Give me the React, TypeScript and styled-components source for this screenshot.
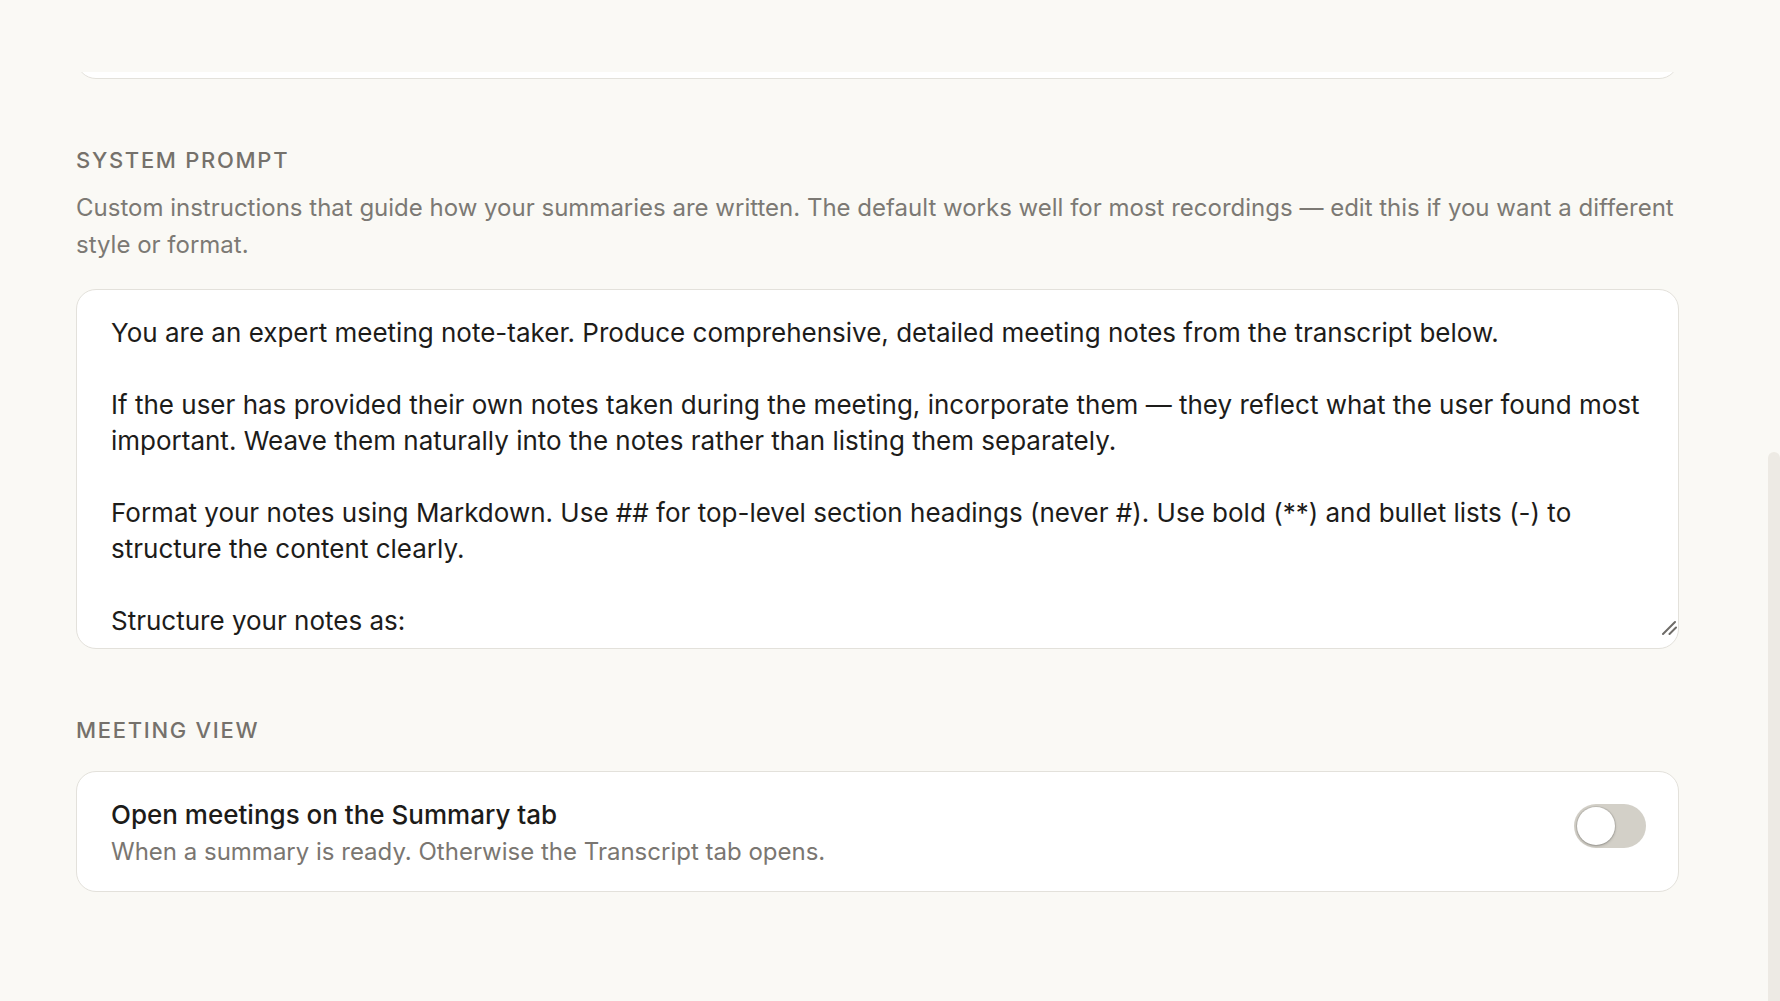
import { useState } from "react";
import styled, { createGlobalStyle } from "styled-components";

const GlobalStyle = createGlobalStyle`
    html, body {
        margin: 0;
        padding: 0;
        background-color: #faf9f5;
        font-family: Inter, "Noto Sans", "Liberation Sans", sans-serif;
        -webkit-font-smoothing: antialiased;
    }
`;

const Page = styled.div`
    display: flex;
    width: 100%;
    height: 100vh;
    overflow: hidden;
    background-color: #faf9f5;
`;

const Main = styled.main`
    flex: 1;
    min-width: 0;
    padding: 72px 89px 0 76px;
    box-sizing: border-box;
`;

const ScrollRail = styled.div`
    width: 12px;
    display: flex;
    flex-direction: column;
`;

const ScrollThumb = styled.div`
    flex: 1;
    margin-top: 452px;
    background-color: #edeae4;
    border-radius: 6px 6px 0 0;
`;

// bottom of the card that is scrolled up under the header
const CardTail = styled.div`
    height: 7px;
    overflow: hidden;
    display: flex;
    flex-direction: column;
    justify-content: flex-end;
`;

const Card = styled.div<{ $tall?: boolean }>`
    flex-shrink: 0;
    box-sizing: border-box;
    height: ${({ $tall }) => ($tall ? "48px" : "auto")};
    background-color: #ffffff;
    border: 1px solid #e3e1db;
    border-radius: 20px;
`;

const Section = styled.section`
    margin-top: 66px;
`;

const Label = styled.h3`
    margin: 0;
    font-size: 22px;
    line-height: 30px;
    font-weight: 500;
    letter-spacing: 1.7px;
    text-transform: uppercase;
    color: #75716b;
`;

const Description = styled.p`
    margin: 14px 0 0;
    font-size: 24px;
    line-height: 37.4px;
    color: #7c7974;
`;

const PromptBox = styled.div`
    position: relative;
    margin-top: 25px;
`;

const PromptInput = styled.textarea`
    display: block;
    width: 100%;
    height: 360px;
    box-sizing: border-box;
    padding: 25px 34px;
    font-family: inherit;
    font-size: 26px;
    line-height: 36px;
    color: #1d1c1a;
    background-color: #ffffff;
    border: 1px solid #e3e1db;
    border-radius: 20px;
    resize: none;
    overflow: hidden;
    outline: none;
`;

const Grip = styled.svg`
    position: absolute;
    right: 2px;
    bottom: 13px;
    width: 16px;
    height: 16px;
    pointer-events: none;
`;

const SettingRow = styled(Card)`
    margin-top: 26px;
    display: flex;
    align-items: flex-start;
    justify-content: space-between;
    padding: 26px 32px 23px 34px;
`;

const SettingText = styled.div`
    display: flex;
    flex-direction: column;
`;

const SettingTitle = styled.div`
    font-size: 26px;
    line-height: 33.6px;
    font-weight: 500;
    color: #1c1b19;
`;

const SettingHint = styled.div`
    margin-top: 4px;
    font-size: 24px;
    line-height: 33px;
    color: #7a7671;
`;

const Toggle = styled.button<{ $on: boolean }>`
    margin-top: 6px;
    width: 72px;
    height: 44px;
    padding: 3px;
    border: none;
    border-radius: 22px;
    background-color: ${({ $on }) => ($on ? "#2d2b28" : "#d3d0c8")};
    display: flex;
    justify-content: ${({ $on }) => ($on ? "flex-end" : "flex-start")};
    cursor: pointer;
    flex-shrink: 0;
`;

const Knob = styled.span`
    width: 38px;
    height: 38px;
    border-radius: 50%;
    background-color: #ffffff;
    box-shadow: 0 0 0 1px rgba(0, 0, 0, 0.08), 0 1px 3px rgba(0, 0, 0, 0.25);
`;

const DEFAULT_PROMPT = `You are an expert meeting note-taker. Produce comprehensive, detailed meeting notes from the transcript below.

If the user has provided their own notes taken during the meeting, incorporate them — they reflect what the user found most important. Weave them naturally into the notes rather than listing them separately.

Format your notes using Markdown. Use ## for top-level section headings (never #). Use bold (**) and bullet lists (-) to structure the content clearly.

Structure your notes as:`;

const App = () => {
    const [openSummary, setOpenSummary] = useState(false);

    return (
        <Page>
            <GlobalStyle />
            <Main>
                <CardTail>
                    <Card $tall />
                </CardTail>

                <Section>
                    <Label>System prompt</Label>
                    <Description>
                        Custom instructions that guide how your summaries are
                        written. The default works well for most recordings —
                        edit this if you want a different style or format.
                    </Description>
                    <PromptBox>
                        <PromptInput
                            defaultValue={DEFAULT_PROMPT}
                            spellCheck={false}
                        />
                        <Grip viewBox="0 0 16 16">
                            <path
                                d="M2 14 L14 2 M8.5 14 L15 7.5"
                                stroke="#6e6c68"
                                strokeWidth="2"
                                strokeLinecap="round"
                                fill="none"
                            />
                        </Grip>
                    </PromptBox>
                </Section>

                <Section>
                    <Label>Meeting view</Label>
                    <SettingRow>
                        <SettingText>
                            <SettingTitle>
                                Open meetings on the Summary tab
                            </SettingTitle>
                            <SettingHint>
                                When a summary is ready. Otherwise the
                                Transcript tab opens.
                            </SettingHint>
                        </SettingText>
                        <Toggle
                            role="switch"
                            aria-checked={openSummary}
                            $on={openSummary}
                            onClick={() => setOpenSummary(!openSummary)}
                        >
                            <Knob />
                        </Toggle>
                    </SettingRow>
                </Section>
            </Main>
            <ScrollRail>
                <ScrollThumb />
            </ScrollRail>
        </Page>
    );
};

export default App;
